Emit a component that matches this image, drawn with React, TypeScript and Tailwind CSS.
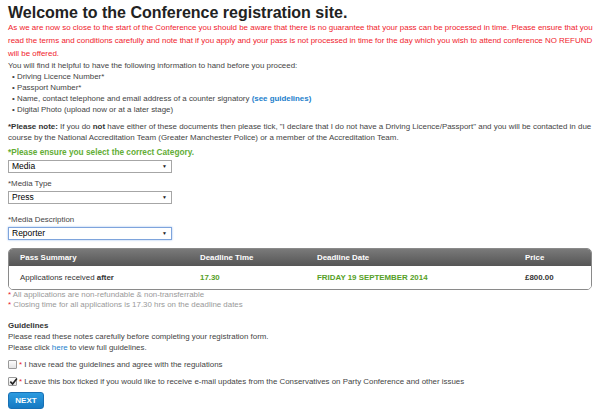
const TEXT = "text-[#444]";

function FakeSelect({ value, focused }: { value: string; focused?: boolean }) {
  return (
    <div
      className={`mt-[2px] flex h-[13px] w-[164px] items-center justify-between bg-white pl-[3px] pr-[4px] text-[8.5px] leading-none text-black ${
        focused
          ? "border border-[#7ea4dc] shadow-[0_0_2px_#9dbdf0]"
          : "border border-[#a6a6a6]"
      }`}
    >
      <span>{value}</span>
      <span className="text-[5px] text-[#222]">▼</span>
    </div>
  );
}

function Box({ checked }: { checked?: boolean }) {
  return (
    <span className="relative inline-block h-[9px] w-[9px] shrink-0 rounded-[1px] border border-[#9a9a9a] bg-gradient-to-b from-[#fdfdfd] to-[#e4e4e4]">
      {checked && (
        <svg viewBox="0 0 10 10" className="absolute left-[0px] top-[-1px] h-[9px] w-[9px]">
          <path d="M1.5 5.2 L4 7.8 L8.8 1.6" fill="none" stroke="#222" strokeWidth="1.8" />
        </svg>
      )}
    </span>
  );
}

export default function App() {
  return (
    <div className="h-[420px] w-[600px] overflow-hidden bg-white px-2 font-['Liberation_Sans',Arial,sans-serif]">
      <h1 className="pt-[5px] text-[16px] font-bold leading-[16px] text-[#222]">
        Welcome to the Conference registration site.
      </h1>

      <p className="whitespace-nowrap text-[7.95px] leading-[13px] text-[#f01a2c]">
        As we are now so close to the start of the Conference you should be aware that there is no guarantee that your pass can be processed in time. Please ensure that you
        <br />
        read the terms and conditions carefully and note that if you apply and your pass is not processed in time for the day which you wish to attend conference NO REFUND
        <br />
        will be offered.
      </p>

      <div className={`text-[7.9px] leading-[11px] ${TEXT}`}>
        <p>You will find it helpful to have the following information to hand before you proceed:</p>
        <ul className="pl-[4px]">
          <li>• Driving Licence Number*</li>
          <li>• Passport Number*</li>
          <li>
            • Name, contact telephone and email address of a counter signatory{" "}
            <span className="font-bold text-[#1b80cc]">(see guidelines)</span>
          </li>
          <li>• Digital Photo (upload now or at a later stage)</li>
        </ul>

        <p className="mt-[6px] whitespace-nowrap text-[7.95px]">
          <b className="text-[#333]">*Please note:</b> If you do <b className="text-[#333]">not</b> have either of these documents then please tick, "I declare that I do not have a Driving Licence/Passport" and you will be contacted in due
          <br />
          course by the National Accreditation Team (Greater Manchester Police) or a member of the Accreditation Team.
        </p>

        <p className="mt-[4px] text-[8.25px] font-bold text-[#62ad35]">*Please ensure you select the correct Category.</p>
        <FakeSelect value="Media" />

        <p className="mt-[5px]">*Media Type</p>
        <FakeSelect value="Press" />

        <p className="mt-[10px]">*Media Description</p>
        <FakeSelect value="Reporter" focused />

        <div className="mt-[8px] overflow-hidden rounded-[5px] border border-[#8a8a8a]">
          <div className="grid h-[17px] grid-cols-[180px_117px_208px_1fr] items-center bg-gradient-to-b from-[#7a7a7a] to-[#555] pl-[11px] font-bold text-white">
            <span>Pass Summary</span>
            <span>Deadline Time</span>
            <span>Deadline Date</span>
            <span>Price</span>
          </div>
          <div className="grid h-[23px] grid-cols-[180px_117px_208px_1fr] items-center bg-white pl-[11px] text-[#333]">
            <span>
              Applications received <b>after</b>
            </span>
            <span className="font-bold text-[#55a026]">17.30</span>
            <span className="font-bold text-[#55a026]">FRIDAY 19 SEPTEMBER 2014</span>
            <span className="font-bold text-[#333]">£800.00</span>
          </div>
        </div>

        <div className="leading-[10px] text-[#999]">
          <p>
            <span className="text-[#e8202a]">*</span> All applications are non-refundable &amp; non-transferrable
          </p>
          <p>
            <span className="text-[#e8202a]">*</span> Closing time for all applications is 17.30 hrs on the deadline dates
          </p>
        </div>

        <p className="mt-[10px] font-bold text-[#333]">Guidelines</p>
        <p>Please read these notes carefully before completing your registration form.</p>
        <p>
          Please click <span className="text-[#1b80cc]">here</span> to view full guidelines.
        </p>

        <label className="mt-[6px] flex h-[11px] items-center gap-[2px]">
          <Box />
          <span>
            <span className="text-[#e8202a]">*</span> I have read the guidelines and agree with the regulations
          </span>
        </label>
        <label className="mt-[6px] flex h-[11px] items-center gap-[2px]">
          <Box checked />
          <span>
            <span className="text-[#e8202a]">*</span> Leave this box ticked if you would like to receive e-mail updates from the Conservatives on Party Conference and other issues
          </span>
        </label>

        <button className="mt-[5px] flex h-[17px] w-[36px] items-center justify-center rounded-[3px] border border-[#1870b4] bg-gradient-to-b from-[#2c9be0] to-[#1579c2] text-[8px] font-bold text-white">
          NEXT
        </button>
      </div>
    </div>
  );
}
